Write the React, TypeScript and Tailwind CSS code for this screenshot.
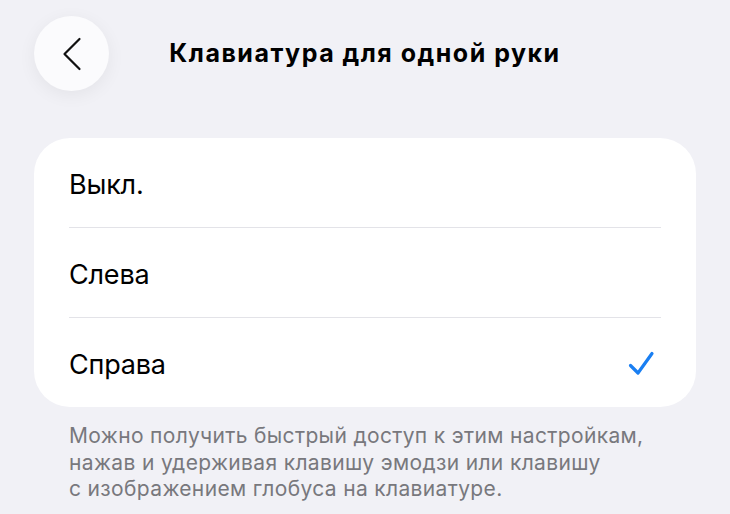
import React from "react";

const font = { fontFamily: '"Inter", "Noto Sans", sans-serif' };

function Row({ label, checked, divider }: { label: string; checked?: boolean; divider?: boolean }) {
  return (
    <div className="px-[35px]">
      <div className={`flex items-center justify-between ${divider ? "h-[90px] border-b border-[#e3e3e8]" : "h-[89px]"}`}>
        <span className="text-[27px] text-black tracking-[-0.2px] pt-[5px]">{label}</span>
        {checked && (
          <svg width="28" height="28" viewBox="0 0 28 28" className="mr-[6px] mt-[2px]">
            <path d="M3.5 15.5 L11 23 L25 3.5" fill="none" stroke="#1a7ff2" strokeWidth="3.2" strokeLinecap="round" strokeLinejoin="round" />
          </svg>
        )}
      </div>
    </div>
  );
}

export default function App() {
  return (
    <div className="w-[730px] h-[514px] bg-[#f1f1f6] overflow-hidden" style={font}>
      <div className="flex items-center pt-[16px] px-[34px]">
        <div className="w-[75px] h-[75px] rounded-full bg-[#fbfbfd] shadow-[0_4px_18px_rgba(0,0,0,0.06)] flex items-center justify-center">
          <svg width="20" height="34" viewBox="0 0 20 34">
            <path d="M17.5 2 L2.5 17 L17.5 32" fill="none" stroke="#111" strokeWidth="2.2" strokeLinecap="round" strokeLinejoin="round" />
          </svg>
        </div>
        <div className="flex-1 text-center text-[25px] font-bold text-black tracking-[1.5px]">Клавиатура для одной руки</div>
        <div className="w-[75px]" />
      </div>
      <div className="mt-[47px] mx-[34px] bg-white rounded-[36px] overflow-hidden">
        <Row label="Выкл." divider />
        <Row label="Слева" divider />
        <Row label="Справа" checked />
      </div>
      <p className="mt-[16px] mx-[69px] text-[21px] leading-[26.5px] tracking-[0.35px] text-[#78787d] whitespace-nowrap">
        Можно получить быстрый доступ к этим настройкам,
        <br />
        нажав и удерживая клавишу эмодзи или клавишу
        <br />
        с изображением глобуса на клавиатуре.
      </p>
    </div>
  );
}
